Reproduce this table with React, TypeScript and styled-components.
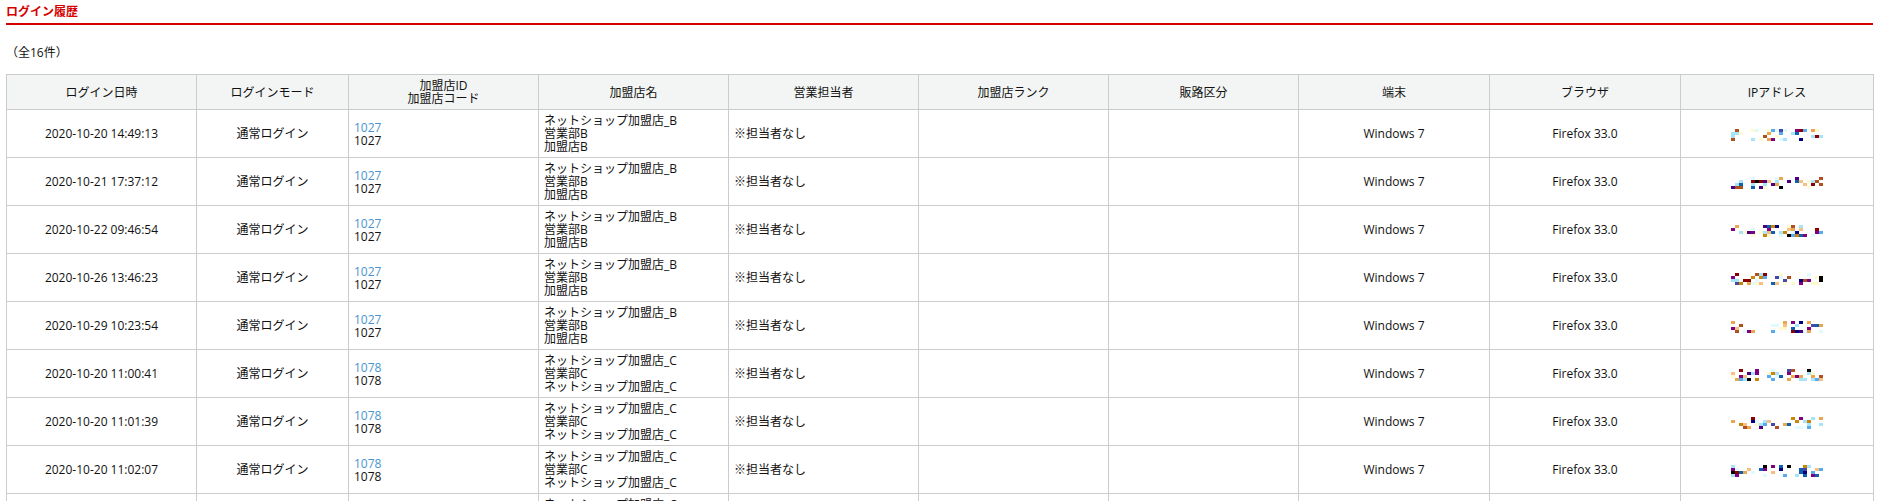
import React from "react";
import styled, { createGlobalStyle } from "styled-components";

const GlobalStyle = createGlobalStyle`
  html, body { margin: 0; padding: 0; background: #fff; }
  body {
    font-family: "Open Sans", "Noto Sans CJK JP", sans-serif;
    color: #111;
    font-size: 12px;
  }
`;

const Page = styled.div`
  width: 1867px;
  margin-left: 6px;
`;

const Title = styled.h2`
  margin: 0;
  padding: 4px 0 3px;
  font-size: 12px;
  line-height: 16px;
  font-weight: bold;
  color: #d40000;
  border-bottom: 2px solid #d40000;
`;

const Count = styled.p`
  margin: 20px 0 13px;
  font-size: 12px;
  line-height: 16px;
`;

const Table = styled.table`
  width: 100%;
  border-collapse: collapse;
  table-layout: fixed;
  font-size: 12px;
  line-height: 13px;
`;

const HeadCell = styled.th`
  background: #f3f5f4;
  border: 1px solid #cccccc;
  font-weight: normal;
  text-align: center;
  vertical-align: middle;
  height: 34px;
  padding: 0 5px;
  color: #111;
`;

const Cell = styled.td<{ $align?: "left" | "center" }>`
  border: 1px solid #cccccc;
  height: 47px;
  padding: 0 5px;
  text-align: ${(p) => p.$align ?? "center"};
  vertical-align: middle;
  color: #111;
`;

const Line = styled.div`
  white-space: nowrap;
`;

const IdLink = styled.a`
  display: block;
  color: #4a94d0;
  text-decoration: none;
`;

const MosaicBox = styled.svg`
  display: block;
  margin: 2px auto 0;
`;

const colWidths = [190, 152, 190, 190, 190, 190, 190, 191, 191, 193];

const headers: React.ReactNode[] = [
  "ログイン日時",
  "ログインモード",
  <>
    <Line>加盟店ID</Line>
    <Line>加盟店コード</Line>
  </>,
  "加盟店名",
  "営業担当者",
  "加盟店ランク",
  "販路区分",
  "端末",
  "ブラウザ",
  "IPアドレス",
];

type Row = { date: string; id: string; shop: "B" | "C" };

const rows: Row[] = [
  { date: "2020-10-20 14:49:13", id: "1027", shop: "B" },
  { date: "2020-10-21 17:37:12", id: "1027", shop: "B" },
  { date: "2020-10-22 09:46:54", id: "1027", shop: "B" },
  { date: "2020-10-26 13:46:23", id: "1027", shop: "B" },
  { date: "2020-10-29 10:23:54", id: "1027", shop: "B" },
  { date: "2020-10-20 11:00:41", id: "1078", shop: "C" },
  { date: "2020-10-20 11:01:39", id: "1078", shop: "C" },
  { date: "2020-10-20 11:02:07", id: "1078", shop: "C" },
  { date: "2020-10-20 11:05:18", id: "1078", shop: "C" },
  { date: "2020-10-21 09:12:44", id: "1078", shop: "C" },
  { date: "2020-10-22 15:30:02", id: "1078", shop: "C" },
  { date: "2020-10-23 10:08:37", id: "1078", shop: "C" },
  { date: "2020-10-26 16:22:51", id: "1078", shop: "C" },
  { date: "2020-10-27 13:45:09", id: "1078", shop: "C" },
  { date: "2020-10-28 11:19:26", id: "1078", shop: "C" },
  { date: "2020-10-29 14:57:33", id: "1078", shop: "C" },
];

const palette = [
  "#000000", "#000080", "#4b0082", "#800080", "#c8860a", "#e8a850",
  "#a8e4f8", "#5aaaf0", "#fffacd", "#f8c080", "#8b0000", "#1060b0",
  "#4848a8", "#b05020", "#e0fbff", "#fffacd", "#a8e4f8", "#e8a850",
];

function rng(seed: number) {
  let a = seed * 2654435761;
  return () => {
    a |= 0;
    a = (a + 0x6d2b79f5) | 0;
    let t = Math.imul(a ^ (a >>> 15), 1 | a);
    t = (t + Math.imul(t ^ (t >>> 7), 61 | t)) ^ t;
    return ((t ^ (t >>> 14)) >>> 0) / 4294967296;
  };
}

const Mosaic: React.FC<{ seed: number }> = ({ seed }) => {
  const r = rng(seed + 7);
  const cols = 23;
  const rowsN = 4;
  const cw = 4;
  const ch = 3;
  const rects: React.ReactNode[] = [];
  for (let y = 0; y < rowsN; y++) {
    for (let x = 0; x < cols; x++) {
      const p = y === 0 ? 0.3 : y === rowsN - 1 ? 0.45 : 0.4;
      if (r() < p) {
        const c = palette[Math.floor(r() * palette.length)];
        rects.push(
          <rect key={`${x}-${y}`} x={x * cw} y={y * ch} width={cw} height={ch} fill={c} />
        );
      }
    }
  }
  return (
    <MosaicBox width={cols * cw} height={rowsN * ch} viewBox={`0 0 ${cols * cw} ${rowsN * ch}`}>
      {rects}
    </MosaicBox>
  );
};

export default function App() {
  return (
    <>
      <GlobalStyle />
      <Page>
        <Title>ログイン履歴</Title>
        <Count>（全16件）</Count>
        <Table>
          <colgroup>
            {colWidths.map((w, i) => (
              <col key={i} style={{ width: w }} />
            ))}
          </colgroup>
          <thead>
            <tr>
              {headers.map((h, i) => (
                <HeadCell key={i}>{h}</HeadCell>
              ))}
            </tr>
          </thead>
          <tbody>
            {rows.map((row, i) => (
              <tr key={i}>
                <Cell>{row.date}</Cell>
                <Cell>通常ログイン</Cell>
                <Cell $align="left">
                  <IdLink href="#">{row.id}</IdLink>
                  <Line>{row.id}</Line>
                </Cell>
                <Cell $align="left">
                  <Line>ネットショップ加盟店_{row.shop}</Line>
                  <Line>営業部{row.shop}</Line>
                  <Line>{row.shop === "B" ? "加盟店B" : "ネットショップ加盟店_C"}</Line>
                </Cell>
                <Cell $align="left">※担当者なし</Cell>
                <Cell />
                <Cell />
                <Cell>Windows 7</Cell>
                <Cell>Firefox 33.0</Cell>
                <Cell>
                  <Mosaic seed={i + 1} />
                </Cell>
              </tr>
            ))}
          </tbody>
        </Table>
      </Page>
    </>
  );
}
